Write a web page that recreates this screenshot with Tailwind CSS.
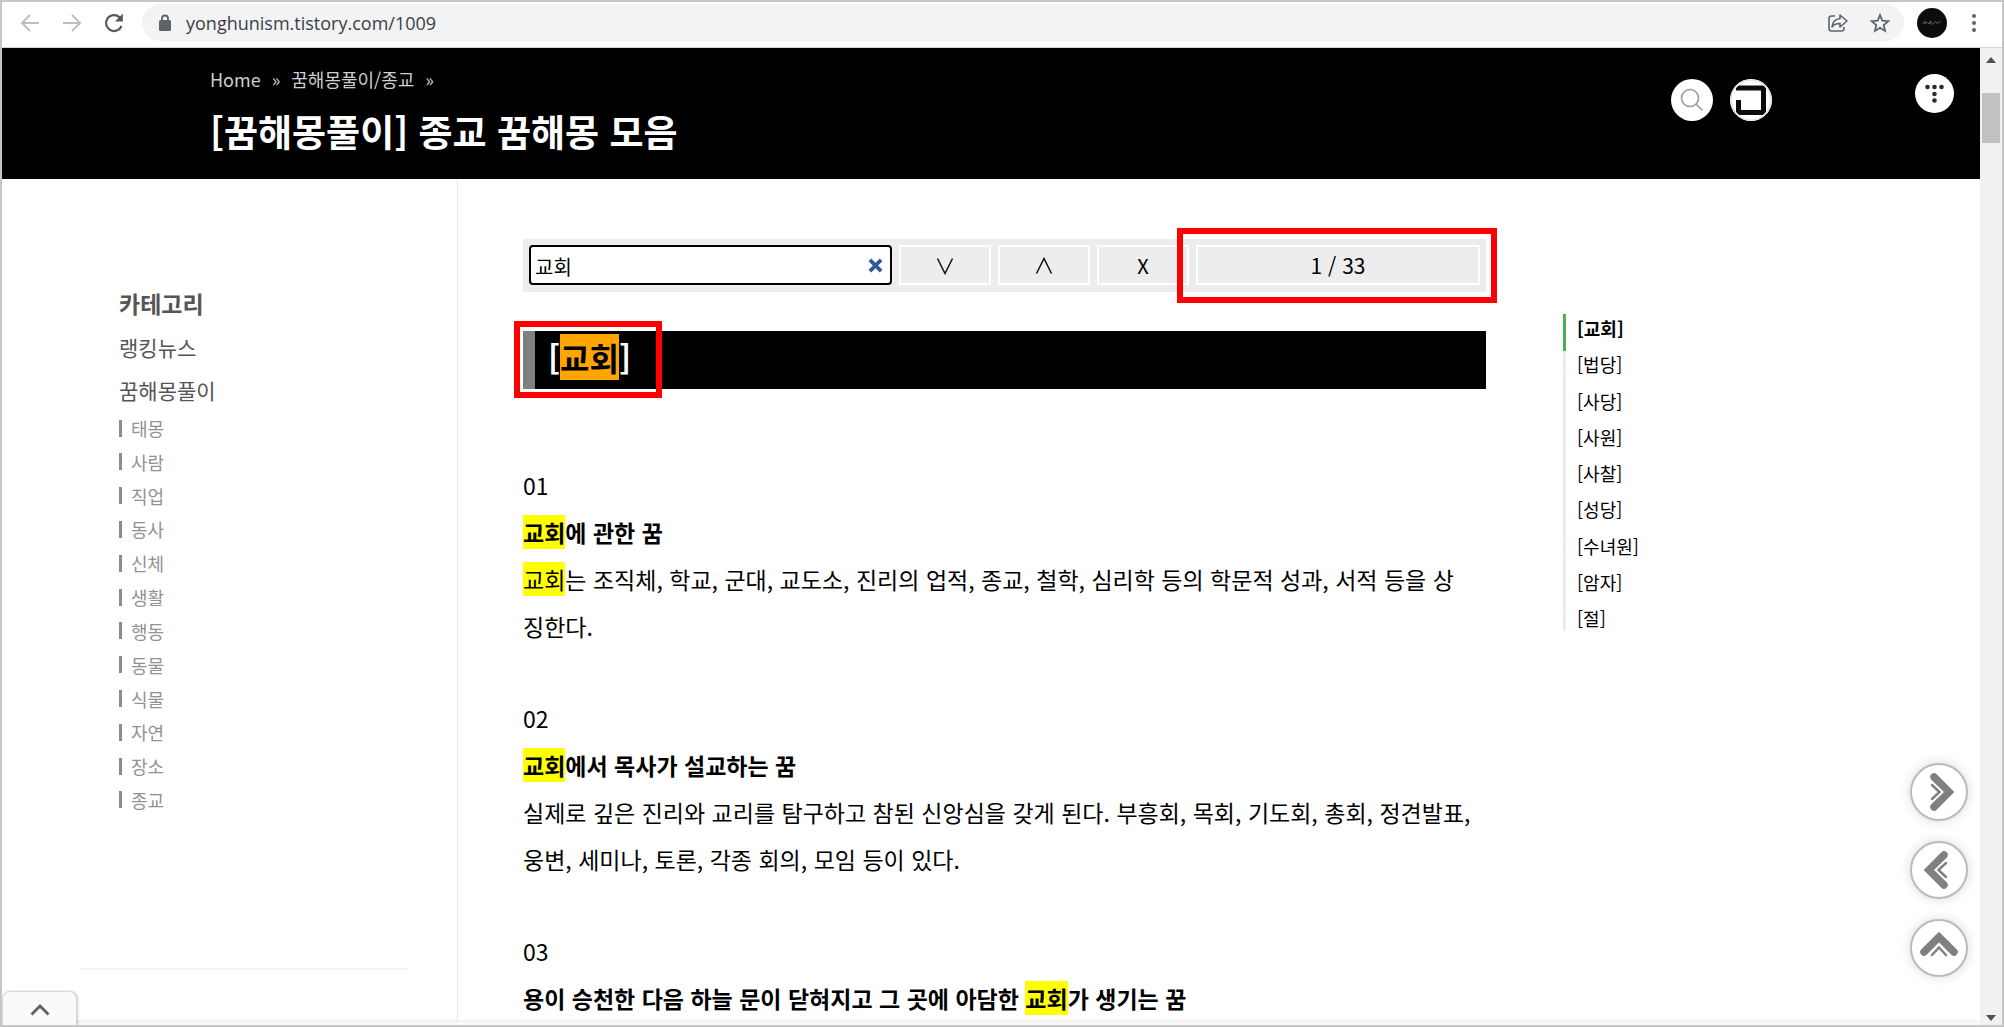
<!DOCTYPE html>
<html lang="ko">
<head>
<meta charset="utf-8">
<title>[꿈해몽풀이] 종교 꿈해몽 모음</title>
<script src="https://cdn.jsdelivr.net/npm/@tailwindcss/browser@4"></script>
</head>
<body class="h-screen overflow-hidden border-2 border-[#c6c6c6] bg-white flex flex-col font-['Noto_Sans_CJK_KR',sans-serif] text-black">

<!-- Browser toolbar -->
<div class="h-[46px] shrink-0 border-b border-[#d5d5d5] flex items-center pl-[17px] pr-[25px] pb-1">
  <button aria-label="뒤로" class="w-[22px] h-[22px]"><svg viewBox="0 0 22 22" fill="none" stroke="#bdbec0" stroke-width="2"><path d="M20 11H3M11 3L3 11l8 8"/></svg></button>
  <button aria-label="앞으로" class="w-[22px] h-[22px] ml-5"><svg viewBox="0 0 22 22" fill="none" stroke="#bdbec0" stroke-width="2"><path d="M2 11h17M11 3l8 8-8 8"/></svg></button>
  <button aria-label="새로고침" class="w-[22px] h-[22px] ml-5"><svg viewBox="0 0 22 22" fill="none" stroke="#55585c" stroke-width="2.200"><path d="M18.500 14A8 8 0 1 1 16.500 5.200L18 7"/><path d="M19.800 1.500v8H12z" fill="#55585c" stroke="none"/></svg></button>
  <div class="ml-[17px] flex-1 h-[37px] rounded-full bg-[#f1f3f4] flex items-center pl-4 pr-[13px]">
    <svg class="w-[14px] h-[18px]" viewBox="0 0 14 18"><rect x="1" y="6" width="12" height="11" rx="1.500" fill="#5f6368"/><path d="M4 7V4.500a3 3 0 0 1 6 0V7" fill="none" stroke="#5f6368" stroke-width="1.800"/></svg>
    <input aria-label="주소" value="yonghunism.tistory.com/1009" class="ml-[14px] flex-1 bg-transparent outline-none font-['Open_Sans',sans-serif] text-lg text-[#3c4043]">
    <button aria-label="공유" class="w-[22px] h-[22px]"><svg viewBox="0 0 22 22" fill="none" stroke="#5f6368" stroke-width="1.600" stroke-linejoin="round"><path d="M8 4H4.500A2.500 2.500 0 0 0 2 6.500v10A2.500 2.500 0 0 0 4.500 19h10a2.500 2.500 0 0 0 2.500-2.500V15"/><path d="M13 3l7 6-7 6v-3.500c-4 0-6.500 1-8 3.500.5-5 3.500-8 8-8.500z"/></svg></button>
    <button aria-label="북마크" class="w-[22px] h-[22px] ml-5"><svg viewBox="0 0 22 22" fill="none" stroke="#5f6368" stroke-width="1.800"><path d="M11 3l2.300 5.600 6 .5-4.600 3.900 1.400 5.900L11 15.700l-5.100 3.200L7.300 13 2.700 9.100l6-.5z"/></svg></button>
  </div>
  <button aria-label="프로필" class="ml-[13px] w-[30px] h-[30px] rounded-full bg-[#0c0c0c] flex items-center justify-center"><svg class="w-5 h-1.5" viewBox="0 0 20 6" fill="none" stroke="#777" stroke-width=".8"><path d="M1 4c2-4 3-3 2 0 2-2 3-2 4 0 1-4 2-4 2-1s3 0 4-1 1 2 3 1 2-2 3-1"/></svg></button>
  <button aria-label="메뉴" class="ml-6 w-1.5 h-[22px]"><svg viewBox="0 0 6 22" fill="#5f6368"><circle cx="3" cy="4" r="2"/><circle cx="3" cy="11" r="2"/><circle cx="3" cy="18" r="2"/></svg></button>
</div>

<div class="flex-1 min-h-0 flex">
  <div class="flex-1 min-w-0 flex flex-col overflow-hidden relative">

    <!-- Page header -->
    <header class="h-[131px] shrink-0 bg-black flex items-start pl-[208px] pr-[26px]">
      <div class="flex-1 pt-[17px]">
        <nav class="flex gap-[11px] text-lg leading-7 text-[#cfcfcf]"><a href="#">Home</a><span>»</span><a href="#">꿈해몽풀이/종교</a><span>»</span></nav>
        <h1 class="mt-[11px] text-[37px] leading-[54px] font-bold text-white">[꿈해몽풀이] 종교 꿈해몽 모음</h1>
      </div>
      <div class="flex items-start">
        <button aria-label="검색" class="mt-[31px] w-[42px] h-[42px] rounded-full bg-white"><svg viewBox="0 0 42 42" fill="none" stroke="#999" stroke-width="1.600"><circle cx="19" cy="19" r="8.500"/><path d="M25 25l6.500 6.500"/></svg></button>
        <button aria-label="구독" class="mt-[31px] ml-[17px] w-[42px] h-[42px] rounded-full bg-white overflow-hidden"><svg viewBox="0 0 42 42" fill="none" stroke="#0c0c0c" stroke-width="5"><path d="M6 9h27.500v24.500H8.500V21"/><circle cx="21" cy="21" r="20" stroke="#e8e8e8" stroke-width="2"/></svg></button>
        <button aria-label="티스토리" class="mt-[26px] ml-[143px] w-[39px] h-[39px] rounded-full bg-white"><svg viewBox="0 0 39 39" fill="#2b2b2b"><circle cx="12.500" cy="13" r="2.300"/><circle cx="19.500" cy="13" r="2.300"/><circle cx="26.500" cy="13" r="2.300"/><circle cx="19.500" cy="20" r="2.300"/><circle cx="19.500" cy="26.500" r="2.300"/></svg></button>
      </div>
    </header>

    <div class="flex-1 min-h-0 flex">
      <!-- Categories -->
      <aside class="w-[456px] shrink-0 border-r border-[#ebebeb]">
        <nav class="pt-[106px] pl-[117px] text-[#555]">
          <h2 class="text-[23px] leading-9 font-bold">카테고리</h2>
          <ul class="mt-[5px] text-[21px] leading-[43px]">
            <li><a href="#">랭킹뉴스</a></li>
            <li><a href="#">꿈해몽풀이</a></li>
          </ul>
          <ul class="mt-[3px] h-[398px] flex flex-col justify-between text-lg leading-[26px] text-[#929292]">
            <li class="flex items-center gap-[9px]"><i class="w-[3px] h-[17px] bg-[#8c8c8c]"></i><a href="#">태몽</a></li>
            <li class="flex items-center gap-[9px]"><i class="w-[3px] h-[17px] bg-[#8c8c8c]"></i><a href="#">사람</a></li>
            <li class="flex items-center gap-[9px]"><i class="w-[3px] h-[17px] bg-[#8c8c8c]"></i><a href="#">직업</a></li>
            <li class="flex items-center gap-[9px]"><i class="w-[3px] h-[17px] bg-[#8c8c8c]"></i><a href="#">동사</a></li>
            <li class="flex items-center gap-[9px]"><i class="w-[3px] h-[17px] bg-[#8c8c8c]"></i><a href="#">신체</a></li>
            <li class="flex items-center gap-[9px]"><i class="w-[3px] h-[17px] bg-[#8c8c8c]"></i><a href="#">생활</a></li>
            <li class="flex items-center gap-[9px]"><i class="w-[3px] h-[17px] bg-[#8c8c8c]"></i><a href="#">행동</a></li>
            <li class="flex items-center gap-[9px]"><i class="w-[3px] h-[17px] bg-[#8c8c8c]"></i><a href="#">동물</a></li>
            <li class="flex items-center gap-[9px]"><i class="w-[3px] h-[17px] bg-[#8c8c8c]"></i><a href="#">식물</a></li>
            <li class="flex items-center gap-[9px]"><i class="w-[3px] h-[17px] bg-[#8c8c8c]"></i><a href="#">자연</a></li>
            <li class="flex items-center gap-[9px]"><i class="w-[3px] h-[17px] bg-[#8c8c8c]"></i><a href="#">장소</a></li>
            <li class="flex items-center gap-[9px]"><i class="w-[3px] h-[17px] bg-[#8c8c8c]"></i><a href="#">종교</a></li>
          </ul>
        </nav>
        <hr class="mt-[155px] ml-[78px] mr-[50px] border-t-2 border-[#f3f3f3]">
      </aside>

      <!-- Article -->
      <main class="w-[963px] shrink-0 ml-[65px] pt-[60px]">
        <form class="relative h-[53px] bg-[#ededed] p-1.5 flex gap-[7px] text-xl">
          <div class="relative w-[363px]">
            <input aria-label="찾기" value="교회" class="w-full h-10 bg-white border-2 border-black rounded px-1 pt-0.5 outline-none">
            <button type="button" aria-label="지우기" class="absolute right-[9px] top-[13px] w-[15px] h-[15px]"><svg viewBox="0 0 16 16" stroke="#2f5b98" stroke-width="4"><path d="M2 2l12 12M14 2L2 14"/></svg></button>
          </div>
          <button type="button" aria-label="다음" class="w-[92px] h-10 border-2 border-white flex items-center justify-center pt-0.5"><svg class="w-[18px] h-[18px]" viewBox="0 0 18 18" fill="none" stroke="#111" stroke-width="1.500"><path d="M1.500 1.500L9 16.500l7.500-15"/></svg></button>
          <button type="button" aria-label="이전" class="w-[92px] h-10 border-2 border-white flex items-center justify-center pt-0.5"><svg class="w-[18px] h-[18px]" viewBox="0 0 18 18" fill="none" stroke="#111" stroke-width="1.500"><path d="M1.500 16.500L9 1.500l7.500 15"/></svg></button>
          <button type="button" class="w-[92px] h-10 border-2 border-white pt-0.5">X</button>
          <output class="flex-1 h-10 border-2 border-white flex items-center justify-center pt-0.5 text-[21px]">1 / 33</output>
          <span class="absolute -top-[11px] -right-[11px] w-[320px] h-[75px] border-6 border-[#f00]"></span>
        </form>

        <h2 class="relative mt-[39px] h-[58px] bg-black border-l-12 border-[#808080] pl-[13px] pb-1.5 flex items-center text-[32px] font-bold text-white"><span>[<mark class="bg-[#ffa500] text-black">교회</mark>]</span>
          <span class="absolute -top-2.5 -left-[21px] w-[148px] h-[77px] border-6 border-[#f00]"></span>
        </h2>

        <div class="mt-[73px] flex flex-col gap-[45px] text-[23px] leading-[47px] whitespace-nowrap">
          <section>
            <p>01</p>
            <h3 class="font-bold"><mark class="bg-[#ff0]">교회</mark>에 관한 꿈</h3>
            <p><mark class="bg-[#ff0]">교회</mark>는 조직체, 학교, 군대, 교도소, 진리의 업적, 종교, 철학, 심리학 등의 학문적 성과, 서적 등을 상<br>징한다.</p>
          </section>
          <section>
            <p>02</p>
            <h3 class="font-bold"><mark class="bg-[#ff0]">교회</mark>에서 목사가 설교하는 꿈</h3>
            <p>실제로 깊은 진리와 교리를 탐구하고 참된 신앙심을 갖게 된다. 부흥회, 목회, 기도회, 총회, 정견발표,<br>웅변, 세미나, 토론, 각종 회의, 모임 등이 있다.</p>
          </section>
          <section>
            <p>03</p>
            <h3 class="font-bold">용이 승천한 다음 하늘 문이 닫혀지고 그 곳에 아담한 <mark class="bg-[#ff0]">교회</mark>가 생기는 꿈</h3>
          </section>
        </div>
      </main>

      <!-- Table of contents -->
      <nav class="ml-[77px] pt-[135px]">
        <ul class="relative h-[317px] border-l-3 border-[#ececec] pl-[11px] pt-px flex flex-col justify-between text-lg leading-[26px]">
          <li class="font-bold"><span class="absolute top-0 -left-[3px] w-[3px] h-[37px] bg-[#4caf50]"></span><a href="#">[교회]</a></li>
          <li><a href="#">[법당]</a></li>
          <li><a href="#">[사당]</a></li>
          <li><a href="#">[사원]</a></li>
          <li><a href="#">[사찰]</a></li>
          <li><a href="#">[성당]</a></li>
          <li><a href="#">[수녀원]</a></li>
          <li><a href="#">[암자]</a></li>
          <li><a href="#">[절]</a></li>
        </ul>
      </nav>
    </div>

    <!-- Floating navigation -->
    <div class="absolute right-3 bottom-12 flex flex-col gap-5">
      <button aria-label="다음 글" class="w-[58px] h-[58px] rounded-full bg-white border-2 border-[#bbb] shadow-[0_0_12px_rgba(0,0,0,0.15)]"><svg viewBox="0 0 54 54" fill="none" stroke="#808080" stroke-linecap="round"><path d="M22 12l15 15-15 15" stroke-width="7.500"/><path d="M20 20l7.500 7-7.500 7" stroke="#fff" stroke-width="6"/><path d="M20 20l7.500 7-7.500 7" stroke-width="2.500"/></svg></button>
      <button aria-label="이전 글" class="w-[58px] h-[58px] rounded-full bg-white border-2 border-[#bbb] shadow-[0_0_12px_rgba(0,0,0,0.15)]"><svg viewBox="0 0 54 54" fill="none" stroke="#808080" stroke-linecap="round"><path d="M32 12L17 27l15 15" stroke-width="7.500"/><path d="M34 20l-7.500 7 7.500 7" stroke="#fff" stroke-width="6"/><path d="M34 20l-7.500 7 7.500 7" stroke-width="2.500"/></svg></button>
      <button aria-label="맨 위로" class="w-[58px] h-[58px] rounded-full bg-white border-2 border-[#bbb] shadow-[0_0_12px_rgba(0,0,0,0.15)]"><svg viewBox="0 0 54 54" fill="none" stroke="#808080" stroke-linecap="round"><path d="M12 31l15-15 15 15" stroke-width="7.500"/><path d="M20 34l7-7.500 7 7.500" stroke="#fff" stroke-width="6"/><path d="M20 34l7-7.500 7 7.500" stroke-width="2.500"/></svg></button>
    </div>

    <!-- Bottom drawer tab -->
    <div class="absolute inset-x-0 bottom-0 h-[3px] bg-[#fafafa] shadow-[0_0_3px_rgba(0,0,0,0.2)]"></div>
    <button aria-label="열기" class="absolute left-0 bottom-0 w-[75px] h-[34px] rounded-t-lg bg-[#fafafa] border border-b-0 border-[#d8d8d8] shadow-[1px_0_2px_rgba(0,0,0,0.2)] flex items-center justify-center pt-0.5"><svg class="w-5 h-3" viewBox="0 0 20 12" fill="none" stroke="#606060" stroke-width="2.800"><path d="M1.500 10.500L10 2l8.500 8.500"/></svg></button>
  </div>

  <!-- Scrollbar -->
  <div class="w-[22px] shrink-0 bg-[#f1f1f1] flex flex-col items-center pt-[9px] pb-1">
    <svg class="w-[10px] h-[6px]" viewBox="0 0 10 6"><path d="M0 6l5-6 5 6z" fill="#505050"/></svg>
    <div class="mt-[30px] w-[18px] h-[50px] bg-[#c1c1c1]"></div>
    <svg class="mt-auto w-[10px] h-[6px]" viewBox="0 0 10 6"><path d="M0 0l5 6 5-6z" fill="#505050"/></svg>
  </div>
</div>
</body>
</html>
